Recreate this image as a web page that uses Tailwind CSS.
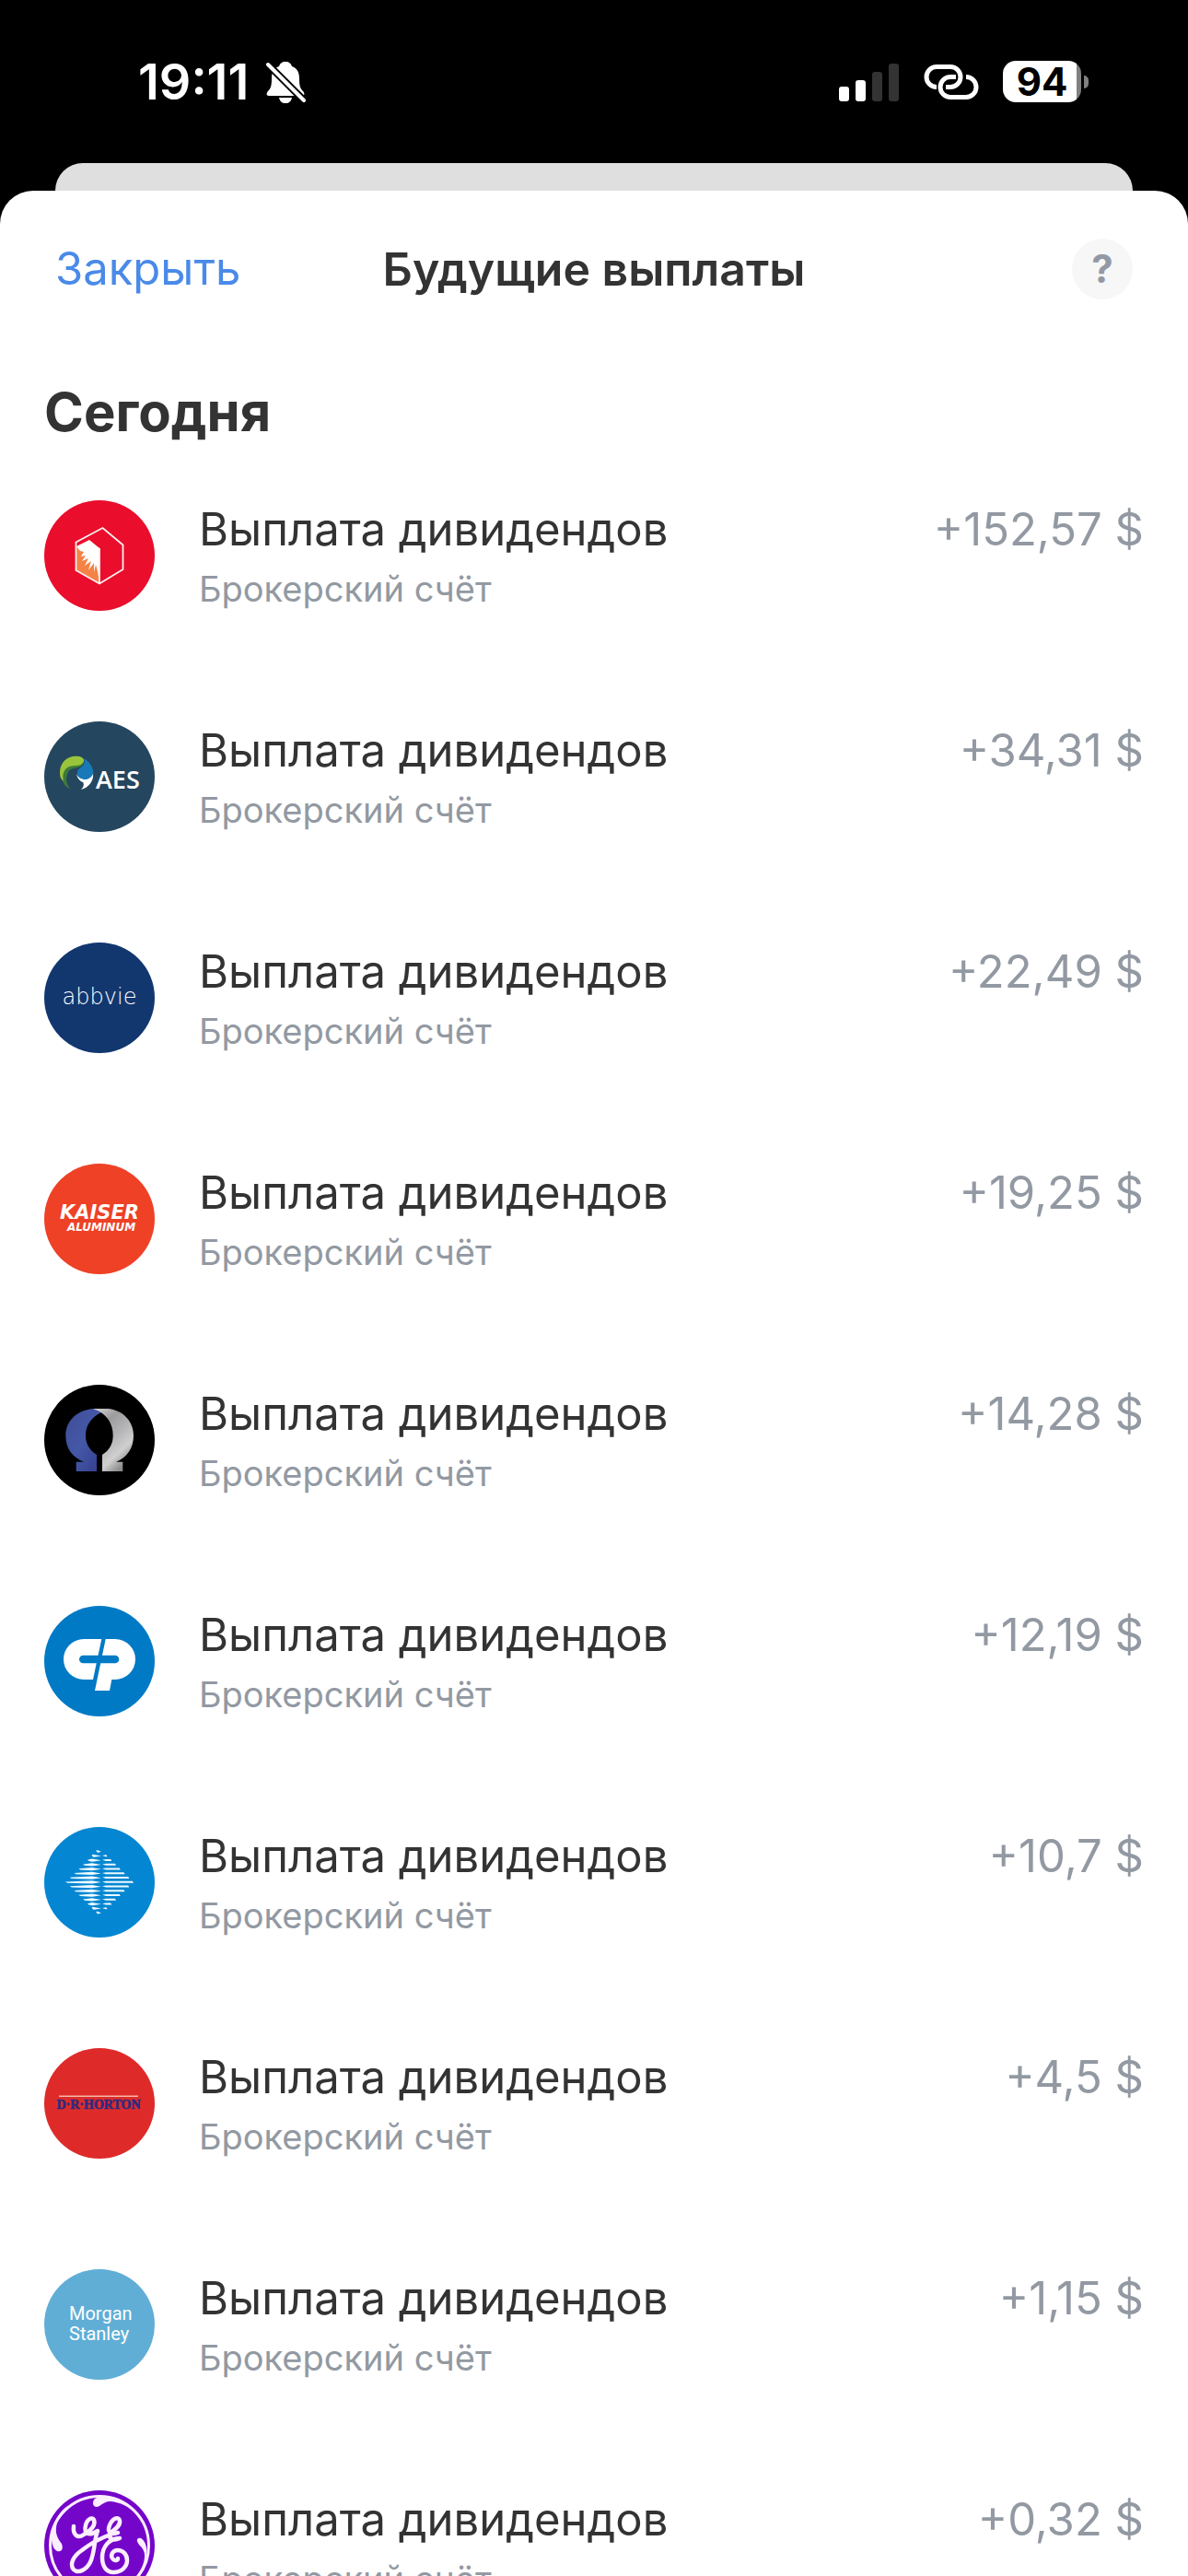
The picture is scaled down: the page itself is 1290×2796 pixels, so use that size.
<!DOCTYPE html>
<html lang="ru">

<head>
    <meta charset="UTF-8">
    <meta name="viewport" content="width=device-width, initial-scale=1.0">
    <title>Будущие выплаты</title>
    <script src="https://cdn.jsdelivr.net/npm/@tailwindcss/browser@4"></script>
</head>

<body class="bg-black h-screen overflow-hidden flex flex-col font-['Inter','Noto_Sans',sans-serif] text-[#333333]">
    <!-- Status bar -->
    <div class="flex justify-between items-center shrink-0 h-[177px] pl-[150px] pr-[108px] text-white">
        <div class="flex items-center gap-[18px]">
            <span class="text-[54px] leading-[60px] font-semibold">19:11</span>
            <svg class="w-[44px] h-[46px]" viewBox="0 0 44 46" fill="none">
                <path d="M22 1c4 0 6 2 7 5 6 2 8 7 8 13 0 8 1 11 4 14 2 2 2 5-1 5H4c-3 0-3-3-1-5 3-3 4-6 4-14 0-6 2-11 8-13 1-3 3-5 7-5z" fill="#fff" />
                <path d="M15 40h14c-1 4-3 6-7 6s-6-2-7-6z" fill="#fff" />
                <path d="M3 4l39 39" stroke="#000" stroke-width="8" />
                <path d="M3 4l39 39" stroke="#fff" stroke-width="4" stroke-linecap="round" />
            </svg>
        </div>
        <div class="flex items-center">
            <svg class="w-[66px] h-[42px] mr-[25px]" viewBox="0 0 66 42">
                <rect x="0" y="26" width="11" height="16" rx="3" fill="#fff" />
                <rect x="18" y="19" width="11" height="23" rx="3" fill="#fff" />
                <rect x="36" y="10" width="11" height="32" rx="3" fill="#333" />
                <rect x="54" y="1" width="11" height="41" rx="3" fill="#333" />
            </svg>
            <svg class="w-[62px] h-[38px] mr-[25px]" viewBox="0 0 62 38" fill="none" stroke="#fff" stroke-width="5" stroke-linecap="butt">
                <path d="M15 24.500a11 11 0 0 1 0-22H30a11 11 0 0 1 0 22H25" />
                <path d="M47 13.500a11 11 0 0 1 0 22H30a11 11 0 0 1 0-22H36" />
            </svg>
            <div class="flex items-center gap-[3px]">
                <div class="flex items-center justify-center w-[85px] h-[45px] rounded-[14px] bg-linear-to-r from-white from-94% to-[#808080] to-94%">
                    <span class="text-[42px] leading-[45px] font-bold text-black">94</span>
                </div>
                <div class="w-[5px] h-[14px] rounded-r-full bg-[#808080]"></div>
            </div>
        </div>
    </div>

    <!-- Card behind the sheet -->
    <div class="shrink-0 h-[30px] mx-[60px] rounded-t-[30px] bg-[#dfdfdf]"></div>

    <!-- Sheet -->
    <main class="flex-1 min-h-0 flex flex-col bg-white rounded-t-[36px]">
        <header class="shrink-0 h-[170px] px-[60px] grid grid-cols-[1fr_auto_1fr] items-center leading-[60px]">
            <button type="button" class="justify-self-start text-[49px] text-[#4a8ae8]">Закрыть</button>
            <h1 class="text-[50px] font-semibold">Будущие выплаты</h1>
            <button type="button" aria-label="Справка" class="justify-self-end w-[66px] h-[66px] rounded-full bg-[#f7f7f8] text-[42px] leading-[66px] font-bold text-[#9299a5]">?</button>
        </header>

        <section class="flex-1 min-h-0 overflow-y-auto [scrollbar-width:none] pt-[34px] px-12">
            <h2 class="text-[58px] leading-[72px] font-bold">Сегодня</h2>
            <ul id="payouts" class="mt-[60px]"></ul>
        </section>
    </main>

    <script>
        // Striped diamond: tapered stripes on the left half, thin ones on the right
        function diamondStripes() {
            let shapes = '';
            for (let i = -7; i <= 7; i++) {
                const y = 60 + i * 4.75;
                const left = 23 + Math.abs(y - 60);
                const right = 97 - Math.abs(y - 60);
                const mid = Math.max(left + 1, 52);
                shapes += `<path d="M${left} ${y - 0.5}L${mid} ${y - 1.8}L62 ${y}L${mid} ${y + 1.4}L${left + 2} ${y + 0.8}z"/>`;
                if (right > 66) {
                    shapes += `<path d="M63 ${y - 0.5}L67 ${y - 1.2}H${right - 1}L${right} ${y + 0.7}H67z"/>`;
                }
            }
            return shapes;
        }

        const logos = {
            hexagon: `
                <circle cx="60" cy="60" r="60" fill="#ea0d2c"/>
                <path d="M35 51h25v39L35 76z" fill="#f58345"/>
                <path d="M35 50l14-7 11 9v38l-2-13-2-7-2 8v-10l-6 8 3-10-7 5 4-8-7 3 4-6-5 1 3-5-4-1z" fill="#fff"/>
                <path d="M34.500 45.500L63.500 30l22 18.500v26.500L60 90.500 34.500 76zM60 52v38" fill="none" stroke="#fff0f0" stroke-width="1.800"/>`,
            aes: `
                <circle cx="60" cy="60" r="60" fill="#25465f"/>
                <path d="M20 62C19 44 34 41 43 45c-2 7-14 4-17 10-3 7-2 13 2 18-5-2-8-6-8-11z" fill="#3d7a3a"/>
                <path d="M17 56C17 43 27 36 38 38c5 1 7 5 3 8-5 4-13 0-18 6-3 4-3 8-2 13-3-2-4-5-4-9z" fill="#9ac43c"/>
                <path d="M43 40c7 4 11 11 10.500 18C52 65 43 66 38 61c-4-5-2-9 3-12 3-2 3-6 2-9z" fill="#1878b8"/>
                <path d="M35 57c3 7 14 9 18 0 1 8-5 15-13 17 2-2 4-5 2-8-3-1-6-4-7-9z" fill="#fff"/>
                <text x="56" y="73" font-family="Open Sans" font-size="27" font-weight="600" fill="#fff">AES</text>`,
            abbvie: `
                <circle cx="60" cy="60" r="60" fill="#12376f"/>
                <text x="60" y="67" text-anchor="middle" font-family="DejaVu Sans" font-size="24" font-weight="200" fill="#fff">abbvie</text>`,
            kaiser: `
                <circle cx="60" cy="60" r="60" fill="#ee4126"/>
                <g font-family="DejaVu Sans" font-weight="700" font-style="italic" fill="#fff" text-anchor="middle">
                    <text x="60" y="60" font-size="21">KAISER</text>
                    <text x="62" y="73" font-size="12">ALUMINUM</text>
                </g>`,
            omega: `
                <defs>
                    <linearGradient id="omegaBlue" x1="0" y1="0" x2="1" y2="1">
                        <stop offset="0" stop-color="#3f4c94"/><stop offset=".5" stop-color="#4458a8"/><stop offset="1" stop-color="#343d8c"/>
                    </linearGradient>
                    <linearGradient id="omegaSilver" x1="0" y1="0" x2=".6" y2="1">
                        <stop offset="0" stop-color="#d8d8d8"/><stop offset=".3" stop-color="#9c9c9e"/><stop offset=".55" stop-color="#b4b4b6"/><stop offset=".8" stop-color="#d0d0d0"/><stop offset="1" stop-color="#8c8c8e"/>
                    </linearGradient>
                </defs>
                <circle cx="60" cy="60" r="60" fill="#000"/>
                <path d="M54 26C36 27 23.300 39 23.300 55c0 15 8 24 19.700 28.700h-8.300V94H57V76c-8-5-12-12-12-21 0-12 7-20 17-25z" fill="url(#omegaBlue)"/>
                <path d="M53 26h17c16 2 27 14 27 29 0 14-7 24-19 28.700h7.300V94H63V76c8-5 11.700-12 11.700-21C74.700 42 68 31 53 26z" fill="url(#omegaSilver)"/>`,
            cp: `
                <circle cx="60" cy="60" r="60" fill="#007ac5"/>
                <path d="M62.300 36H43a22 22 0 0 0 0 44h10z" fill="#fff"/>
                <path d="M66.700 36H77a22 22 0 0 1 0 44h-3.700L71 92H55z" fill="#fff"/>
                <rect x="38" y="53.700" width="43.300" height="8.600" rx="4.300" fill="#007ac5"/>`,
            diamond: `
                <circle cx="60" cy="60" r="60" fill="#0486d2"/>
                <g fill="#eefaff">${diamondStripes()}</g>`,
            horton: `
                <circle cx="60" cy="60" r="60" fill="#de2b2a"/>
                <path d="M16 52.300h86" stroke="#f5b8a8" stroke-width="1.400"/>
                <text x="59" y="66" text-anchor="middle" font-family="Liberation Serif" font-size="14" font-weight="700" fill="#2c2a80" stroke="#2c2a80" stroke-width=".6">D·R·HORTON</text>`,
            morgan: `
                <circle cx="60" cy="60" r="60" fill="#60aed6"/>
                <g font-family="Roboto" font-size="20" fill="#fff">
                    <text x="27" y="55">Morgan</text>
                    <text x="27" y="77">Stanley</text>
                </g>`,
            ge: `
                <circle cx="60" cy="60" r="60" fill="#7406c9"/>
                <g fill="none" stroke="#fdeeff" stroke-linecap="round" stroke-linejoin="round">
                    <circle cx="60" cy="60" r="53.500" stroke-width="3"/>
                    <path d="M32 39c-1 9 4 14 11 9 7-4 13-10 11-16-2-4-8 0-9 6-2 8 2 13 13 6-4 10-3 24-8 34-4 8-13 13-18 8-5-6 0-15 9-21 9-7 20-13 31-17" stroke-width="4.500"/>
                    <path d="M80 46c-8 3-12-1-9-8 3-8 10-10 11-5 1 6-6 10-11 14-1 6 4 8 11 5-12 0-19 10-19 21 0 10 5 16 12 16 9 0 15-6 15-13 0-7-5-11-10-11-6 0-9 6-5 10 2 2 5 1 5-1" stroke-width="4.500"/>
                </g>
                <g fill="#fdeeff">
                    <path d="M53 14c0-7 9-8 20-6 14 2 24 11 29 20-10-11-20-15-30-16-5 0-8 2-12 5-3 2-7 1-7-3z"/>
                    <path d="M14 66c-6-3-7-13-5-24C11 32 18 22 26 16 17 25 12 36 13 46c1 5 3 8 6 12 2 6 0 9-5 8z"/>
                    <path d="M105 52c5 3 7 10 6 18-1 14-9 25-20 33 12-11 18-22 18-32 0-5-2-8-6-12-4-5-2-8 2-7z"/>
                    <path d="M67 106c0 7-9 8-20 6-14-2-24-11-29-20 10 11 20 15 30 16 5 0 8-2 12-5 3-2 7-1 7 3z"/>
                </g>`
        };

        const payouts = [
            { logo: 'hexagon', amount: '+152,57 $' },
            { logo: 'aes', amount: '+34,31 $' },
            { logo: 'abbvie', amount: '+22,49 $' },
            { logo: 'kaiser', amount: '+19,25 $' },
            { logo: 'omega', amount: '+14,28 $' },
            { logo: 'cp', amount: '+12,19 $' },
            { logo: 'diamond', amount: '+10,7 $' },
            { logo: 'horton', amount: '+4,5 $' },
            { logo: 'morgan', amount: '+1,15 $' },
            { logo: 'ge', amount: '+0,32 $' }
        ];

        document.getElementById('payouts').innerHTML = payouts.map(p => `
            <li class="flex items-start pb-[120px]">
                <svg class="w-[120px] h-[120px] shrink-0 mr-12" viewBox="0 0 120 120" aria-hidden="true">${logos[p.logo]}</svg>
                <div class="flex-1 min-w-0">
                    <p class="text-[49px] leading-[64px]">Выплата дивидендов</p>
                    <p class="mt-2 text-[38px] leading-[48px] text-[#9299a2]">Брокерский счёт</p>
                </div>
                <p class="text-[49px] leading-[64px] text-[#9299a2]">${p.amount}</p>
            </li>
        `).join('');
    </script>
</body>

</html>
